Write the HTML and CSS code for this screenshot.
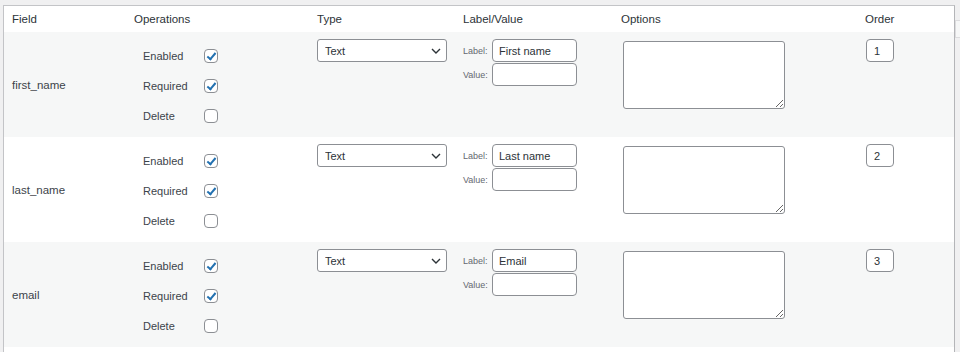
FILE: index.html
```html
<!DOCTYPE html>
<html>
<head>
<meta charset="utf-8">
<link rel="stylesheet" href="styles.css">
</head>
<body>
<div class="page">
  <div class="panel">
    <table class="fields">
      <colgroup>
        <col class="c-field"><col class="c-ops"><col class="c-type"><col class="c-label"><col class="c-options"><col class="c-order">
      </colgroup>
      <thead>
        <tr><th>Field</th><th>Operations</th><th>Type</th><th>Label/Value</th><th>Options</th><th>Order</th></tr>
      </thead>
      <tbody>
        <tr class="alt">
          <td class="name">first_name</td>
          <td class="ops">
            <div class="op"><span>Enabled</span><input type="checkbox" checked></div>
            <div class="op"><span>Required</span><input type="checkbox" checked></div>
            <div class="op"><span>Delete</span><input type="checkbox"></div>
          </td>
          <td class="top"><span class="select-wrap"><select><option>Text</option></select><svg class="chev" width="10" height="6" viewBox="0 0 10 6"><path d="M1 1l4 4 4-4" fill="none" stroke="#2c3338" stroke-width="1.4"/></svg></span></td>
          <td class="top">
            <div class="lv"><span class="lbl">Label:</span><input class="txt" type="text" value="First name"></div>
            <div class="lv"><span class="lbl">Value:</span><input class="txt" type="text" value=""></div>
          </td>
          <td class="top opt"><textarea></textarea></td>
          <td class="top"><input class="ord" type="text" value="1"></td>
        </tr>
        <tr>
          <td class="name">last_name</td>
          <td class="ops">
            <div class="op"><span>Enabled</span><input type="checkbox" checked></div>
            <div class="op"><span>Required</span><input type="checkbox" checked></div>
            <div class="op"><span>Delete</span><input type="checkbox"></div>
          </td>
          <td class="top"><span class="select-wrap"><select><option>Text</option></select><svg class="chev" width="10" height="6" viewBox="0 0 10 6"><path d="M1 1l4 4 4-4" fill="none" stroke="#2c3338" stroke-width="1.4"/></svg></span></td>
          <td class="top">
            <div class="lv"><span class="lbl">Label:</span><input class="txt" type="text" value="Last name"></div>
            <div class="lv"><span class="lbl">Value:</span><input class="txt" type="text" value=""></div>
          </td>
          <td class="top opt"><textarea></textarea></td>
          <td class="top"><input class="ord" type="text" value="2"></td>
        </tr>
        <tr class="alt">
          <td class="name">email</td>
          <td class="ops">
            <div class="op"><span>Enabled</span><input type="checkbox" checked></div>
            <div class="op"><span>Required</span><input type="checkbox" checked></div>
            <div class="op"><span>Delete</span><input type="checkbox"></div>
          </td>
          <td class="top"><span class="select-wrap"><select><option>Text</option></select><svg class="chev" width="10" height="6" viewBox="0 0 10 6"><path d="M1 1l4 4 4-4" fill="none" stroke="#2c3338" stroke-width="1.4"/></svg></span></td>
          <td class="top">
            <div class="lv"><span class="lbl">Label:</span><input class="txt" type="text" value="Email"></div>
            <div class="lv"><span class="lbl">Value:</span><input class="txt" type="text" value=""></div>
          </td>
          <td class="top opt"><textarea></textarea></td>
          <td class="top"><input class="ord" type="text" value="3"></td>
        </tr>
      </tbody>
    </table>
  </div>
  <div class="side"><div class="side-box"></div></div>
</div>
</body>
</html>
```
FILE: styles.css
```css
html, body {
  margin: 0;
  padding: 0;
  background: #f0f0f1;
  font-family: "Liberation Sans", Arial, sans-serif;
  color: #2c3338;
  overflow: hidden;
}
.page {
  display: flex;
  align-items: flex-start;
  padding: 5px 0 0 3px;
  height: 347px;
}
.panel {
  width: 950px;
  background: #fff;
  border: 1px solid #c3c4c7;
  border-right-color: #b4b5b8;
  padding-bottom: 20px;
}
.side {
  flex: 1;
  padding-top: 15px;
}
.side-box {
  height: 16px;
  background: #f6f7f7;
  border: 1px solid #dcdcde;
  border-right: none;
}
.fields {
  border-collapse: collapse;
  table-layout: fixed;
  width: 950px;
}
.c-field { width: 122px; }
.c-ops { width: 183px; }
.c-type { width: 146px; }
.c-label { width: 158px; }
.c-options { width: 244px; }
.c-order { width: 97px; }
th {
  text-align: left;
  font-weight: normal;
  font-size: 11.5px;
  height: 26px;
  padding: 0 8px;
  color: #2c3338;
  background: #fff;
}
tbody tr { background: #fff; }
tbody tr.alt { background: #f6f7f7; }
td {
  padding: 0 8px;
  font-size: 11.5px;
  height: 105px;
  box-sizing: border-box;
  color: #3c434a;
}
td.name { vertical-align: middle; }
td.top { vertical-align: top; padding-top: 7px; }
td.ops { vertical-align: top; padding: 9px 8px 6px 8px; }
.op {
  display: flex;
  align-items: center;
  height: 30px;
  padding-left: 9px;
}
.op span {
  width: 61px;
  font-size: 11px;
  color: #3c434a;
}
.op input {
  appearance: none;
  -webkit-appearance: none;
  margin: 0;
  width: 14px;
  height: 14px;
  border: 1px solid #8c8f94;
  border-radius: 4px;
  background: #fff;
  box-sizing: border-box;
  position: relative;
}
.op input:checked::before {
  content: "";
  position: absolute;
  left: 4px;
  top: 1px;
  width: 3px;
  height: 7px;
  border-right: 2px solid #2271b1;
  border-bottom: 2px solid #2271b1;
  transform: rotate(40deg);
}
.select-wrap {
  position: relative;
  display: inline-block;
}
select {
  appearance: none;
  -webkit-appearance: none;
  width: 130px;
  height: 23px;
  margin: 0;
  padding: 0 0 0 7px;
  border: 1px solid #8c8f94;
  border-radius: 3px;
  background: #fff;
  font-family: "Liberation Sans", Arial, sans-serif;
  font-size: 11px;
  color: #2c3338;
  box-sizing: border-box;
}
.chev {
  position: absolute;
  right: 6px;
  top: 9px;
}
.lv {
  display: flex;
  align-items: center;
  margin-bottom: 1px;
}
.lbl {
  width: 29px;
  font-size: 9px;
  color: #646970;
}
.txt {
  width: 85px;
  height: 23px;
  margin: 0;
  padding: 0 6px;
  border: 1px solid #8c8f94;
  border-radius: 4px;
  font-family: "Liberation Sans", Arial, sans-serif;
  font-size: 11px;
  color: #2c3338;
  box-sizing: border-box;
  background: #fff;
}
td.opt { padding-top: 9px; padding-left: 10px; }
textarea {
  display: block;
  width: 162px;
  height: 68px;
  margin: 0;
  border: 1px solid #8c8f94;
  border-radius: 3px;
  background: #fff;
  box-sizing: border-box;
  resize: both;
}
.ord {
  width: 28px;
  height: 23px;
  margin: 0 0 0 1px;
  padding: 0 7px;
  border: 1px solid #8c8f94;
  border-radius: 4px;
  font-family: "Liberation Sans", Arial, sans-serif;
  font-size: 11px;
  color: #2c3338;
  box-sizing: border-box;
  background: #fff;
}
```
